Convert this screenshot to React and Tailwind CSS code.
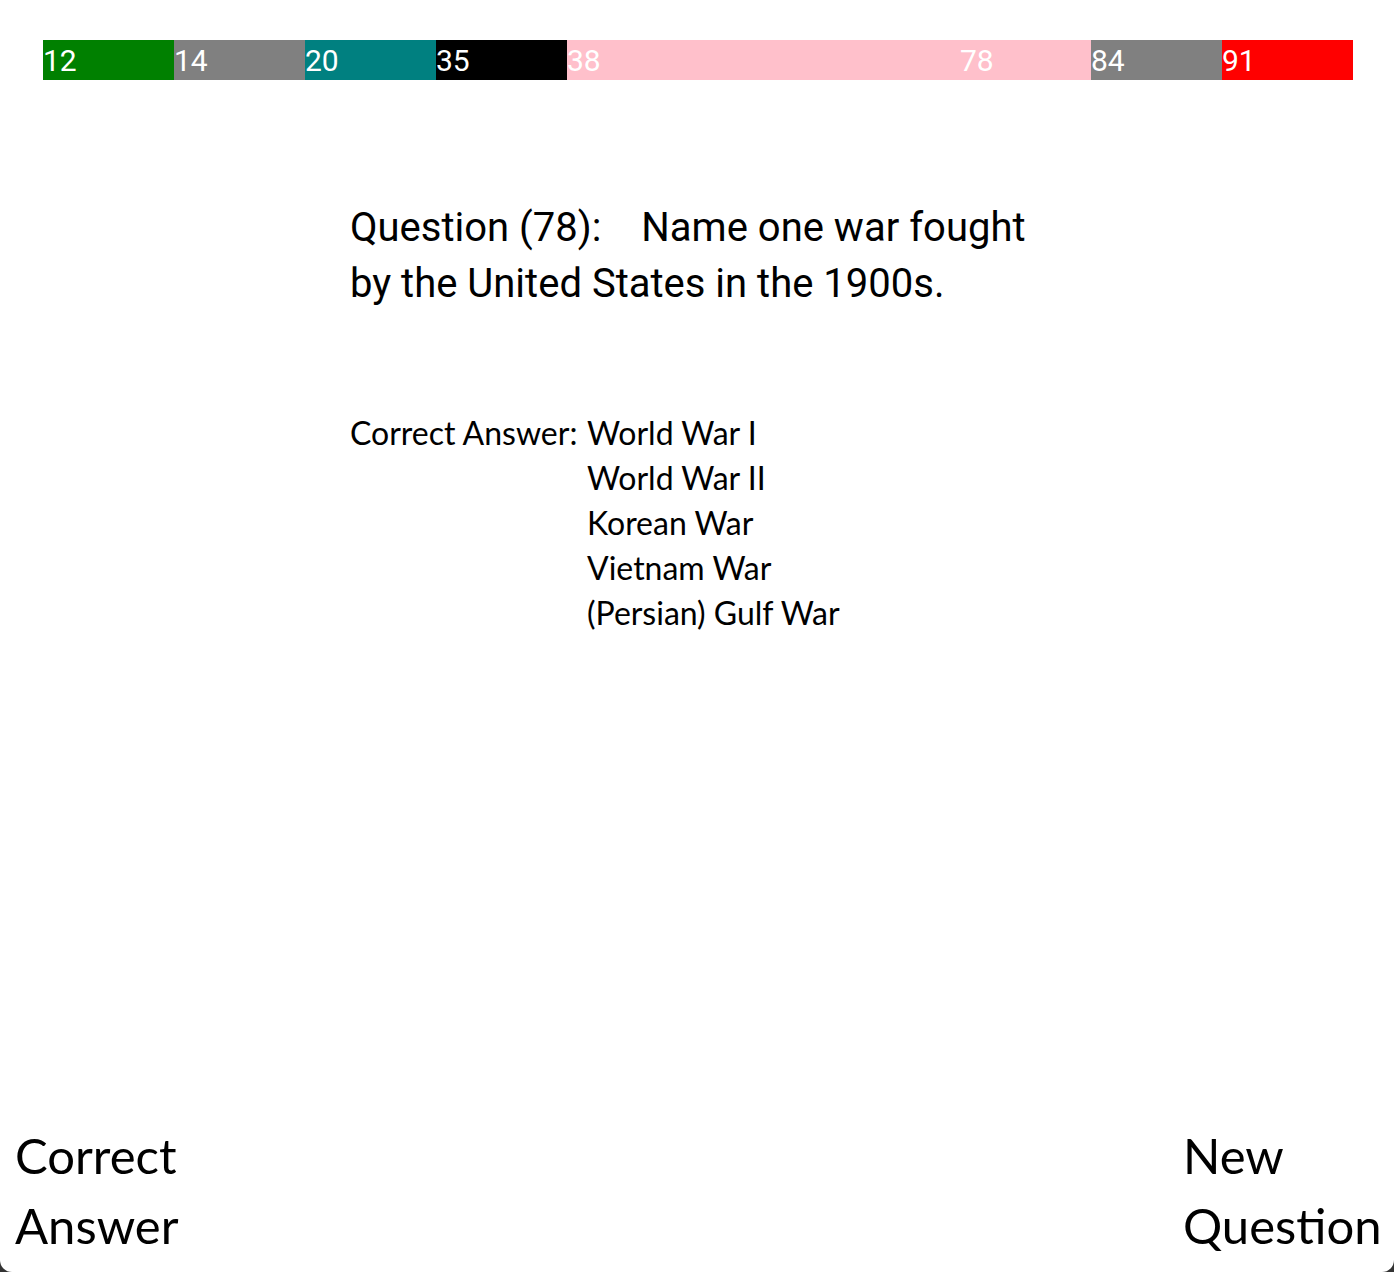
import React from 'react';

const SEGMENTS = [
  { label: '12', color: 'bg-[#008000]' },
  { label: '14', color: 'bg-[#808080]' },
  { label: '20', color: 'bg-[#008080]' },
  { label: '35', color: 'bg-black' },
  { label: '38', color: 'bg-[#ffc0cb]' },
  { label: '', color: 'bg-[#ffc0cb]' },
  { label: '', color: 'bg-[#ffc0cb]' },
  { label: '78', color: 'bg-[#ffc0cb]' },
  { label: '84', color: 'bg-[#808080]' },
  { label: '91', color: 'bg-[#ff0000]' },
];

const ANSWERS = ['World War I', 'World War II', 'Korean War', 'Vietnam War', '(Persian) Gulf War'];

export default function App() {
  return (
    <div className="bg-[#333] w-[1394px] h-[1272px]">
      <div className="flex flex-col h-full bg-white rounded-b-xl overflow-hidden text-black">
        {/* progress bar */}
        <div className="flex mt-10 ml-[43px] mr-[41px] h-10 font-['Roboto',sans-serif]">
          {SEGMENTS.map((s, i) => (
            <div key={i} className={`flex-1 ${s.color} text-white text-[30px] leading-[42px]`}>
              {s.label}
            </div>
          ))}
        </div>

        {/* question */}
        <div className="ml-[350px] mt-[120px] text-[40px] leading-[56px] font-['Roboto',sans-serif]">
          <div>
            Question (78):<span className="inline-block w-[40px]"></span>Name one war fought
          </div>
          <div>by the United States in the 1900s.</div>
        </div>

        {/* answer */}
        <div className="flex ml-[350px] mt-[98px] font-['Lato',sans-serif] text-[32px] leading-[45px]">
          <div className="w-[237px]">Correct Answer:</div>
          <div className="flex flex-col">
            {ANSWERS.map((a) => (
              <div key={a}>{a}</div>
            ))}
          </div>
        </div>

        <div className="flex-1" />

        {/* buttons */}
        <div className="flex justify-between items-end pl-[15px] pr-[14px] pb-3 font-['Lato',sans-serif] text-[49px] leading-[70px]">
          <button className="text-left">
            Correct
            <br />
            Answer
          </button>
          <button className="text-left w-[197px]">
            New
            <br />
            Question
          </button>
        </div>
      </div>
    </div>
  );
}
